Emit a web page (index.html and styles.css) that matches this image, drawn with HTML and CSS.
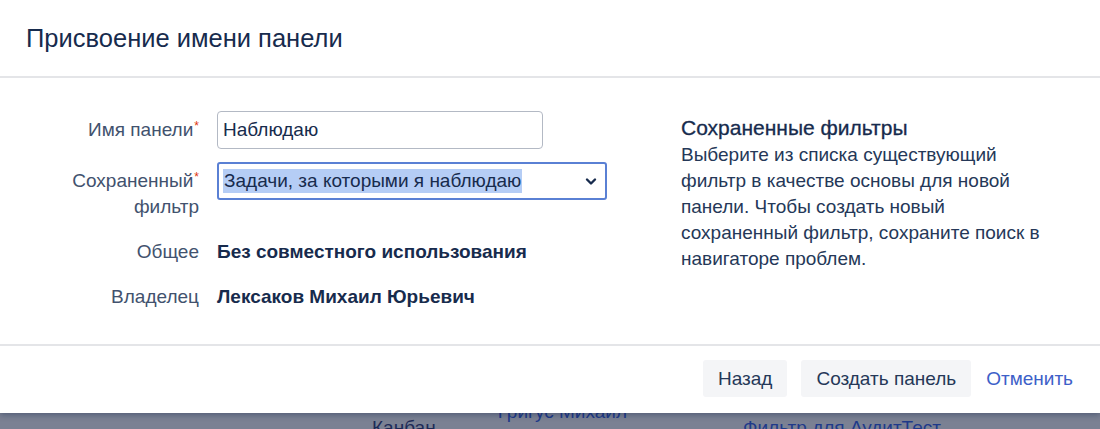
FILE: index.html
```html
<html>

<head>
    <meta charset="utf-8">
    <link rel="stylesheet" href="styles.css">
</head>

<body>
    <div class="dialog">
        <div class="dialog-header">
            <h2 class="dialog-title">Присвоение имени панели</h2>
        </div>
        <div class="dialog-body">
            <form class="form" action="" method="post">
                <label class="label" for="boardName">Имя панели<span class="req">*</span></label>
                <div class="field">
                    <input class="text-input" type="text" id="boardName" value="Наблюдаю">
                </div>

                <label class="label" for="filter">Сохраненный<span class="req">*</span> фильтр</label>
                <div class="field">
                    <div class="select" id="filter">
                        <span class="select-value">Задачи, за которыми я наблюдаю</span>
                        <svg class="chevron" width="12" height="9" viewBox="0 0 12 9">
                            <path d="M2 2.5 L6 6.5 L10 2.5" fill="none" stroke="#172b4d" stroke-width="2.4" stroke-linecap="round" stroke-linejoin="round" />
                        </svg>
                    </div>
                </div>

                <div class="label">Общее</div>
                <div class="field value">Без совместного использования</div>

                <div class="label">Владелец</div>
                <div class="field value">Лексаков Михаил Юрьевич</div>
            </form>

            <div class="help">
                <h3 class="help-title">Сохраненные фильтры</h3>
                <p class="help-text">Выберите из списка существующий фильтр в качестве основы для новой панели. Чтобы создать новый сохраненный фильтр, сохраните поиск в навигаторе проблем.</p>
            </div>
        </div>
        <div class="dialog-footer">
            <button class="btn" type="button">Назад</button>
            <button class="btn" type="button">Создать панель</button>
            <a class="link" href="#">Отменить</a>
        </div>
    </div>

    <div class="behind">
        <span class="cell cell-board">Канбан</span>
        <span class="cell cell-owner">Григус Михаил</span>
        <span class="cell cell-filter">Фильтр для АудитТест</span>
    </div>
</body>

</html>
```

FILE: styles.css
```css
body {
    margin: 0;
    background: #7b8193;
    font-family: "Liberation Sans", Arial, sans-serif;
    font-size: 19px;
    color: #172b4d;
    overflow: hidden;
}

.dialog {
    position: relative;
    z-index: 1;
    background: #fff;
    height: 413px;
    box-shadow: 0 2px 6px rgba(9, 30, 66, 0.35);
    display: flex;
    flex-direction: column;
}

.dialog-header {
    height: 78px;
    border-bottom: 2px solid #e4e5e8;
    display: flex;
    align-items: center;
    padding-left: 26px;
    box-sizing: border-box;
    flex: none;
}

.dialog-title {
    margin: 0;
    font-size: 25.5px;
    font-weight: normal;
    color: #172b4d;
}

.dialog-body {
    flex: 1;
    display: flex;
    padding-top: 33px;
    border-bottom: 2px solid #e4e5e8;
}

.form {
    margin: 0;
    width: 607px;
    display: grid;
    grid-template-columns: 199px 1fr;
    column-gap: 18px;
    row-gap: 13px;
    align-content: start;
}

.label {
    text-align: right;
    color: #42526e;
    line-height: 26px;
    padding: 6px 0 0 68px;
}

.req {
    color: #de350b;
    font-size: 12px;
    vertical-align: top;
    line-height: 18px;
    margin-left: 1px;
}

.field {
    min-width: 0;
}

.value {
    font-weight: bold;
    line-height: 26px;
    padding-top: 6px;
    color: #172b4d;
}

.text-input {
    width: 326px;
    height: 38px;
    box-sizing: border-box;
    border: 1px solid #b3b9c4;
    border-radius: 4px;
    padding: 0 5px;
    font-family: inherit;
    font-size: 19px;
    color: #172b4d;
    outline: none;
}

.select {
    width: 390px;
    height: 38px;
    box-sizing: border-box;
    border: 2px solid #5a80d4;
    border-radius: 3px;
    display: flex;
    align-items: center;
    padding: 0 8px 0 4px;
}

.select-value {
    background: #b5cdf5;
    line-height: 24px;
    padding: 0 1px;
}

.chevron {
    margin-left: auto;
}

.help {
    margin-left: 74px;
    width: 368px;
    padding-top: 4px;
}

.help-title {
    margin: 0;
    font-size: 21px;
    font-weight: normal;
    line-height: 26px;
    color: #172b4d;
    -webkit-text-stroke: 0.3px #172b4d;
}

.help-text {
    margin: 1px 0 0;
    line-height: 26px;
    color: #253858;
}

.dialog-footer {
    flex: none;
    height: 67px;
    box-sizing: border-box;
    display: flex;
    justify-content: flex-end;
    align-items: flex-start;
    padding: 14px 27px 0 0;
    gap: 14px;
}

.btn {
    height: 37px;
    padding: 0 15px;
    border: none;
    border-radius: 3px;
    background: #f4f5f7;
    font-family: inherit;
    font-size: 19px;
    color: #253858;
    cursor: pointer;
}

.link {
    color: #3d60c8;
    text-decoration: none;
    line-height: 37px;
    margin-left: 1px;
}

.behind {
    display: flex;
    margin-top: -12px;
    color: #1d2a57;
    font-size: 19px;
    line-height: 22px;
}

.cell-board {
    margin-left: 372px;
    padding-top: 16px;
}

.cell-owner {
    margin-left: 62px;
    color: #1f3a8a;
}

.cell-filter {
    margin-left: 116px;
    padding-top: 16px;
    color: #1f3a8a;
}
```
